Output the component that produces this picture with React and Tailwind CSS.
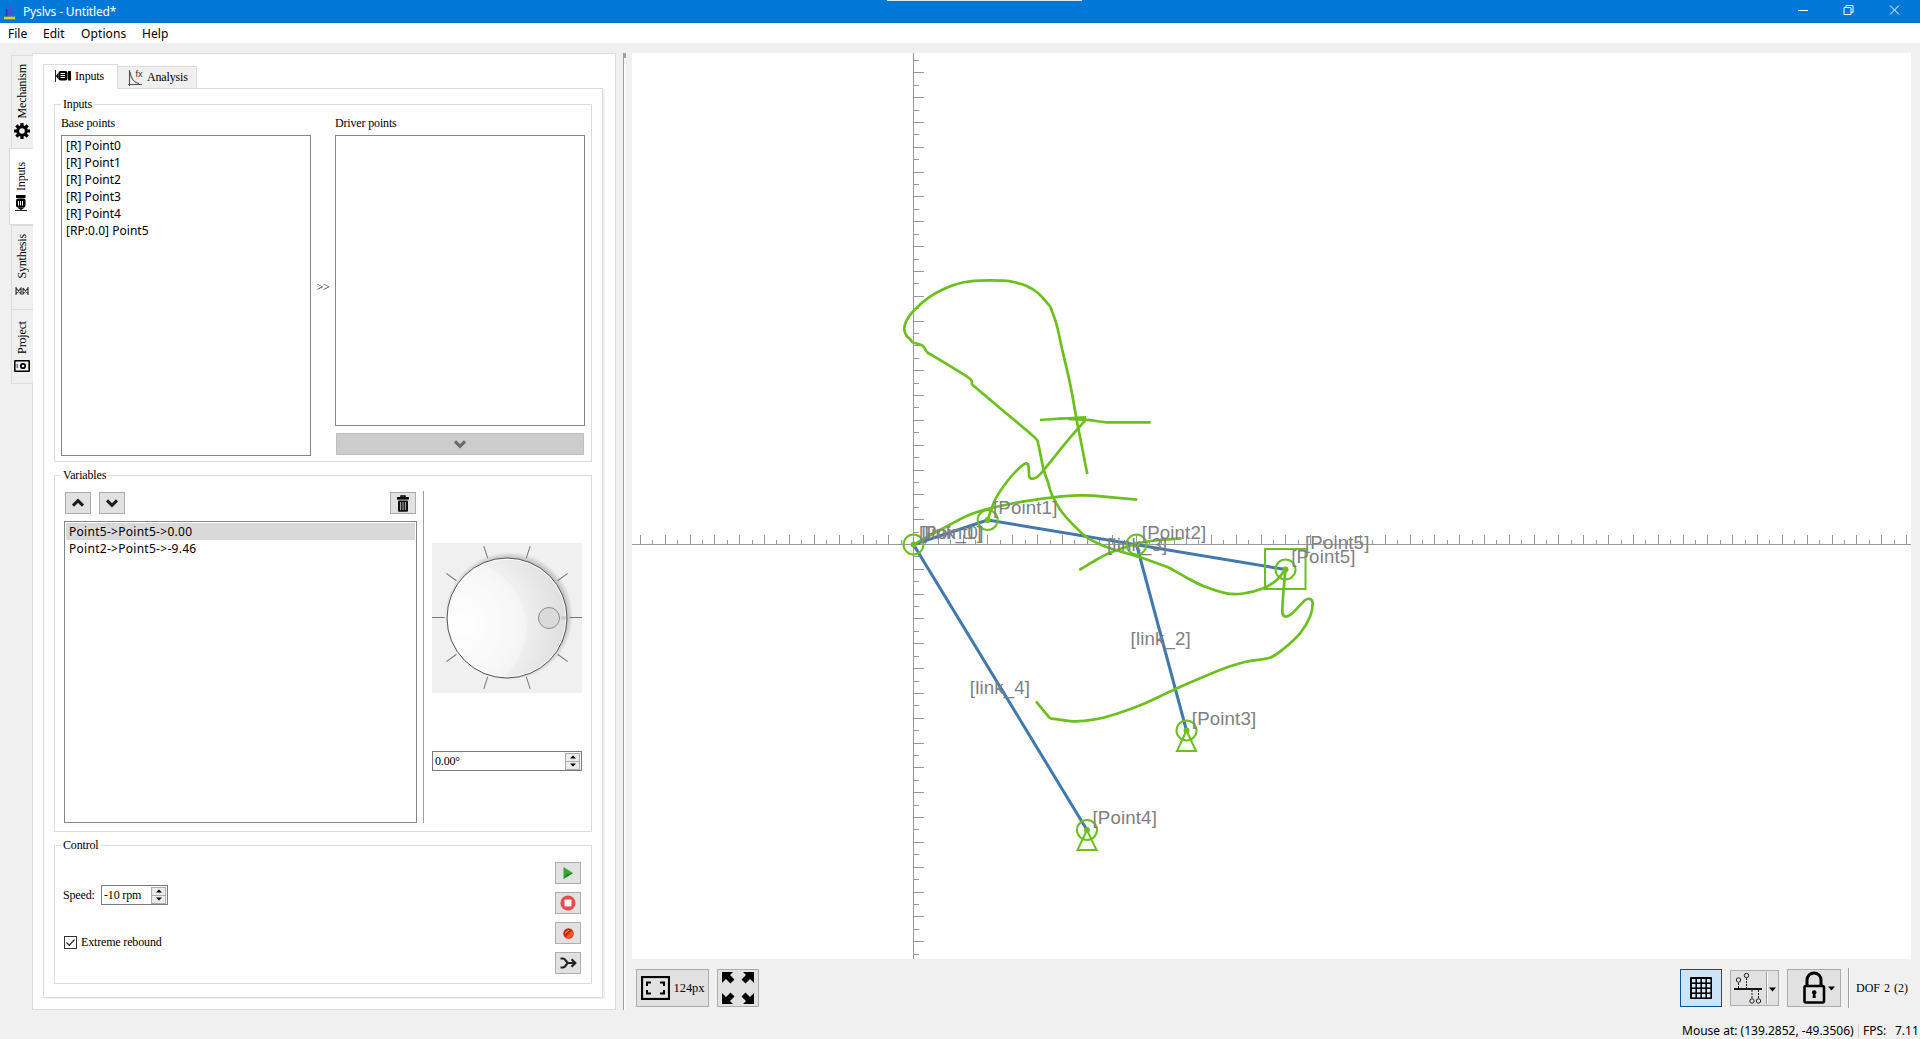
import React from "react";

const GREEN = "#6cc01d";
const BLUE = "#4178ae";

/* ---------- small icons ---------- */
const Motor = ({ className = "" }) => (
  <svg width="16" height="14" viewBox="0 0 16 14" className={className}>
    <path d="M0.5 1v12M0.5 7H3" stroke="#222" strokeWidth="1" />
    <path d="M1.5 6l2-2.500v7l-2-2.500z" fill="#000" />
    <rect x="3.500" y="2" width="9" height="9.500" rx="2" fill="#000" />
    <path d="M5.500 4.500h4.500M5.500 6.500h4.500M5.500 8.500h4.500" stroke="#fff" strokeWidth="1" />
    <rect x="13" y="2" width="3" height="9.500" rx="0.500" fill="#000" />
  </svg>
);

const Gear = () => (
  <svg width="16" height="16" viewBox="0 0 16 16">
    <circle cx="8" cy="8" r="4.3" fill="none" stroke="#000" strokeWidth="3" />
    <path d="M8 0v3.500M8 12.500V16M0 8h3.500M12.500 8H16M2.340 2.340l2.500 2.500M11.200 11.200l2.460 2.460M13.660 2.340l-2.500 2.500M4.840 11.200l-2.500 2.460" stroke="#000" strokeWidth="3.200" />
  </svg>
);

const SynthesisIcon = () => (
  <svg width="14" height="8" viewBox="0 0 14 8">
    <path d="M1 0v8M13 0v8M1 1l5 6V1L1 7M8 1v6l5-6M8 1l5 6" fill="none" stroke="#333" strokeWidth="1.1" />
  </svg>
);

const ProjectIcon = () => (
  <svg width="16" height="12" viewBox="0 0 16 12">
    <rect x="0.8" y="0.8" width="14.4" height="10.4" rx="0.5" fill="#f0f0f0" stroke="#000" strokeWidth="1.6" />
    <circle cx="9" cy="6" r="2.2" fill="none" stroke="#000" strokeWidth="1.8" />
    <path d="M3.3 4v4" stroke="#777" strokeWidth="1.5" />
  </svg>
);

const ChevronGlyph = ({ up, color = "#1c1c1c" }) => (
  <svg width="14" height="10" viewBox="0 0 14 10" className={up ? "rotate-180" : ""}>
    <path d="M2 2.4l5 5 5-5" fill="none" stroke={color} strokeWidth="3" />
  </svg>
);

const Trash = () => (
  <svg width="12" height="17" viewBox="0 0 12 17">
    <path d="M4 2V1h4v1" fill="none" stroke="#000" strokeWidth="1.4" />
    <rect x="0" y="2" width="12" height="2.6" fill="#000" />
    <rect x="1" y="5.4" width="10" height="11.4" rx="1" fill="#111" />
    <path d="M3.6 7v8M6 7v8M8.4 7v8" stroke="#b0b0b0" strokeWidth="1" />
  </svg>
);

const Button = ({ children, className = "" }) => (
  <div className={"flex items-center justify-center border border-[#adadad] bg-[#e1e1e1] " + className}>{children}</div>
);

const Spin = ({ value, className = "" }) => (
  <div className={"flex h-[20px] items-center justify-between border border-[#7a7a7a] bg-white pl-[2px] pr-px " + className}>
    <span>{value}</span>
    <div className="flex h-[17px] w-[15px] flex-col border border-[#adadad] bg-[#ececec]">
      <div className="flex flex-1 items-center justify-center border-b border-[#adadad]">
        <svg width="6" height="4" viewBox="0 0 6 4"><path d="M0 3.5L3 0.5l3 3z" fill="#000" /></svg>
      </div>
      <div className="flex flex-1 items-center justify-center">
        <svg width="6" height="4" viewBox="0 0 6 4"><path d="M0 0.5L3 3.5l3-3z" fill="#000" /></svg>
      </div>
    </div>
  </div>
);

const Group = ({ title, className = "", children }) => (
  <div className={"ml-[10px] w-[538px] border border-[#dcdcdc] " + className}>
    <div className="-mt-[8px] ml-[6px] h-[15px] w-fit bg-white px-[2px] leading-[15px]">{title}</div>
    {children}
  </div>
);

const SideTab = ({ label, icon, className = "" }) => (
  <div className={"flex flex-col items-center border border-r-0 border-[#dcdcdc] " + className}>
    <span className="rotate-180 text-[12px] leading-[16px] [writing-mode:vertical-rl]">{label}</span>
    {icon}
  </div>
);

/* ---------- dial ---------- */
const Dial = () => (
  <svg width="150" height="150" viewBox="0 0 150 150" className="bg-[#f0f0f0]">
    <defs>
      <radialGradient id="face" cx="0.1" cy="0.55" r="0.95">
        <stop offset="0" stopColor="#ffffff" />
        <stop offset="0.5" stopColor="#f3f3f3" />
        <stop offset="1" stopColor="#dcdcdc" />
      </radialGradient>
      <radialGradient id="shade" cx="0.5" cy="0.5" r="0.5">
        <stop offset="0.9" stopColor="#bdbdbd" />
        <stop offset="1" stopColor="#f0f0f0" />
      </radialGradient>
      <clipPath id="dialClip"><circle cx="75" cy="75" r="60" /></clipPath>
    </defs>
    <circle cx="77" cy="73" r="64" fill="url(#shade)" />
    <circle cx="75" cy="75" r="60" fill="url(#face)" />
    <circle cx="28" cy="84" r="66" fill="#fff" opacity="0.35" clipPath="url(#dialClip)" />
    <circle cx="75" cy="75" r="59" fill="none" stroke="#fff" strokeWidth="1" />
    <circle cx="75" cy="75" r="60" fill="none" stroke="#555" strokeWidth="1" />
    {[0, 36, 72, 108, 144, 180, 216, 252, 288, 324].map((a) => (
      <path key={a} d="M137.5 74.500H150" stroke="#777" strokeWidth="1" transform={`rotate(${a} 75 74.500)`} />
    ))}
    <path d="M129 75h5" stroke="#c8c8c8" strokeWidth="3" />
    <circle cx="117" cy="75" r="10.5" fill="#dadada" stroke="#8c8c8c" />
  </svg>
);

/* ---------- drawing canvas (view box uses window coordinates) ---------- */
const OX = 913.5;
const OY = 544.5;
const STEP = 12.413;

function ticks() {
  let d = "";
  for (let i = -22; i <= 80; i++) {
    const x = Math.round(OX + i * STEP - 0.5) + 0.5;
    d += `M${x} ${OY}v${i % 2 ? -5 : -10}`;
  }
  for (let i = -39; i <= 33; i++) {
    const y = Math.round(OY + i * STEP - 0.5) + 0.5;
    d += `M${OX} ${y}h${i % 2 ? 5 : 10}`;
  }
  return d;
}

function smooth(p) {
  let d = `M${p[0][0]} ${p[0][1]}`;
  for (let i = 0; i < p.length - 1; i++) {
    const a = p[i - 1] || p[i];
    const b = p[i];
    const c = p[i + 1];
    const e = p[i + 2] || c;
    d += `C${b[0] + (c[0] - a[0]) / 7} ${b[1] + (c[1] - a[1]) / 7} ${c[0] - (e[0] - b[0]) / 7} ${c[1] - (e[1] - b[1]) / 7} ${c[0]} ${c[1]}`;
  }
  return d;
}

const TRACES = [
  [[1087.3, 474], [1080, 436.7], [1076.7, 420], [1070, 383.3], [1062.3, 350], [1056.7, 325], [1050.3, 306.5]],
  [[1050.3, 306.5], [1038.3, 293.3], [1026.7, 286], [1015, 282.3], [1003.3, 280.6], [980, 280.6], [961.7, 282.7], [946.7, 287.7], [930, 296.7], [913.3, 311], [906, 321.7], [904.3, 330], [906.7, 336], [910, 339], [912.5, 342.5]],
  [[912.5, 342.5], [922.5, 345.7], [926.7, 352]],
  [[926.7, 352], [968.3, 377.5], [971.7, 384.3]],
  [[971.7, 384.3], [998.3, 406.7], [1034, 436.7], [1038.3, 444.3], [1043.3, 468.3], [1048.3, 483.3], [1052, 495], [1061.7, 511.7], [1076.7, 528.3], [1088.3, 538.3], [1110, 548.3], [1138.3, 556.7], [1160, 564.3], [1170, 568.3], [1186.7, 577.7], [1203.3, 586], [1226.7, 593.3], [1243.3, 593.5], [1263.3, 588.3], [1276.7, 580], [1285.5, 569.5]],
  [[1285.5, 569.5], [1283.3, 593.3], [1282.5, 613.3], [1286.7, 616.5], [1293.3, 612.3], [1305, 600.3], [1310, 599], [1312.7, 603.3], [1310, 616.7], [1300, 633.3], [1283.3, 649], [1270, 657.7], [1245, 662], [1223.3, 668.7], [1200, 678.3], [1173.3, 690], [1143.3, 704], [1116.7, 713.7], [1093.3, 719.7], [1073.3, 721.3], [1050, 718.3]],
  [[1050, 718.3], [1036, 701.3]],
  [[913.5, 544.5], [943.3, 528.3], [973.3, 513.3], [1013.3, 503.3], [1053.3, 497.3], [1080, 495.4], [1093.3, 495.7], [1137.3, 499.7]],
  [[987.7, 520], [995, 500], [1008.3, 480], [1022.5, 465.3], [1028, 464.3], [1029.3, 476.5], [1032, 478.6], [1040, 474.3], [1066.7, 441.7], [1086, 419.5]],
  [[1040, 420], [1060, 418.7], [1080, 417.7], [1086, 417.3]],
  [[1068, 419], [1090, 420.2], [1106.7, 422.3], [1150.7, 422.4]],
  [[1079.3, 570], [1106.7, 554.3], [1136.7, 543.7], [1160, 540], [1181.7, 538.4]],
];

const POINTS = [[913.5, 544.5], [987.7, 520], [1136.5, 544.5], [1285.5, 569.5], [1186.5, 730.5], [1087, 830]];

const LABELS = [
  ["[link_1]", 921.5, 539], ["[Point0]", 919, 539], ["[Point1]", 993, 514], ["[Point2]", 1141.8, 539],
  ["[link_3]", 1107, 551], ["[Point5]", 1305, 549], ["[Point5]", 1291.2, 563], ["[link_2]", 1130.6, 645],
  ["[link_4]", 969.8, 694], ["[Point3]", 1191.8, 725], ["[Point4]", 1092.5, 824],
];

const Canvas = () => (
  <svg width="1279" height="906" viewBox="632 53 1279 906" className="block bg-white">
    <g stroke="#98989c" strokeWidth="1" fill="none" shapeRendering="crispEdges">
      <path d={`M632 ${OY}H1911M${OX} 53V959`} />
      <path d={ticks()} />
    </g>
    <path d="M987.7 520L913.5 544.5L1087 830M987.7 520L1285.5 569.5M1136.5 544.5L1186.5 730.5" fill="none" stroke={BLUE} strokeWidth="3" />
    <g fill="none" stroke={GREEN} strokeWidth="2">
      {POINTS.map(([x, y], i) => (
        <g key={i}>
          <circle cx={x} cy={y} r="10" />
          <circle cx={x} cy={y} r="3" fill={GREEN} stroke="none" />
        </g>
      ))}
      <path d="M1186.5 730.5l-9.5 20.5h19zM1087 830l-9.500 20h19z" />
      <rect x="1265" y="549" width="40.500" height="40" />
    </g>
    <g fill="none" stroke={GREEN} strokeWidth="2.7">
      {TRACES.map((t, i) => <path key={i} d={smooth(t)} />)}
    </g>
    <g fill="#808080" fontFamily='"Liberation Sans", Arial, sans-serif' fontSize="18.67" letterSpacing="0.15">
      {LABELS.map(([t, x, y], i) => <text key={i} x={x} y={y}>{t}</text>)}
    </g>
  </svg>
);

/* ---------- left panel ---------- */
const UI_SANS = "font-['Noto_Sans','Open_Sans',sans-serif]";

const InputsGroup = () => (
  <Group title="Inputs" className="mt-[15px] h-[358px]">
    <div className="ml-[6px] mt-[4px] flex">
      <div className="w-[250px]">
        <div className="h-[19px] leading-[15px]">Base points</div>
        <div className={"h-[321px] border border-[#828790] pl-[4px] pt-px text-[12px] tracking-[0.03px] " + UI_SANS}>
          {["[R] Point0", "[R] Point1", "[R] Point2", "[R] Point3", "[R] Point4", "[RP:0.0] Point5"].map((t) => (
            <div key={t} className="h-[17px] leading-[17px]">{t}</div>
          ))}
        </div>
      </div>
      <div className="flex w-[24px] items-center justify-center pt-[2px] text-[12px]">&gt;&gt;</div>
      <div className="w-[250px]">
        <div className="h-[19px] leading-[15px]">Driver points</div>
        <div className="h-[291px] border border-[#828790]" />
        <div className="mx-px mt-[7px] flex h-[22px] items-center justify-center border border-[#bfbfbf] bg-[#cccccc]">
          <ChevronGlyph color="#6a6a6a" />
        </div>
      </div>
    </div>
  </Group>
);

const VariablesGroup = () => (
  <Group title="Variables" className="mt-[13px] h-[357px]">
    <div className="ml-[9px] mt-[8px] flex">
      <div className="w-[353px]">
        <div className="flex h-[30px] gap-[8px] pl-px pr-px pt-px">
          <Button className="h-[22px] w-[26px]"><ChevronGlyph up /></Button>
          <Button className="h-[22px] w-[26px]"><ChevronGlyph /></Button>
          <Button className="ml-auto h-[22px] w-[26px]"><Trash /></Button>
        </div>
        <div className={"h-[302px] border border-[#828790] p-px text-[12px] tracking-[0.28px] " + UI_SANS}>
          <div className="h-[17px] bg-[#d9d9d9] pl-[3px] leading-[17px]">Point5-&gt;Point5-&gt;0.00</div>
          <div className="h-[17px] pl-[3px] leading-[17px]">Point2-&gt;Point5-&gt;-9.46</div>
        </div>
      </div>
      <div className="ml-[6px] h-[332px] w-px bg-[#a0a0a0]" />
      <div className="ml-[8px] w-[150px] pt-[52px]">
        <Dial />
        <Spin value={"0.00°"} className="mt-[58px] w-[150px]" />
      </div>
    </div>
  </Group>
);

const ControlGroup = () => (
  <Group title="Control" className="mt-[13px] h-[139px]">
    <div className="ml-[9px] mr-[10px] mt-[9px] flex justify-between">
      <div className="pt-[23px]">
        <div className="flex items-center">
          <span className="-ml-px w-[38px]">Speed:</span>
          <Spin value="-10 rpm" className="w-[67px]" />
        </div>
        <div className="mt-[31px] flex h-[13px] items-center gap-[4px]">
          <svg width="13" height="13" viewBox="0 0 13 13">
            <rect x="0.5" y="0.5" width="12" height="12" fill="#fff" stroke="#333" />
            <path d="M2.500 6.500l2.800 2.800L10.500 3.500" fill="none" stroke="#333" strokeWidth="1.3" />
          </svg>
          <span>Extreme rebound</span>
        </div>
      </div>
      <div className="flex flex-col gap-[8px]">
        <Button className="h-[22px] w-[26px]">
          <svg width="10" height="12" viewBox="0 0 10 12"><path d="M0.500 0L10 6L0.500 12z" fill="#3aa63a" /><path d="M0.500 12L10 6L4 7z" fill="#178a17" /></svg>
        </Button>
        <Button className="h-[22px] w-[26px]">
          <svg width="16" height="16" viewBox="0 0 16 16"><circle cx="8" cy="8" r="7.600" fill="#e84c4c" /><rect x="4.500" y="4.500" width="7" height="7" rx="1" fill="#fff" /></svg>
        </Button>
        <Button className="h-[22px] w-[26px]">
          <svg width="11" height="11" viewBox="0 0 11 11"><circle cx="5.500" cy="5.500" r="5.200" fill="#cf2208" /><path d="M2 9.500L9 2.500A5 5 0 0 1 2 9.500z" fill="#ee5a20" /><path d="M2 5.500L6 2" stroke="#f4b0a0" strokeWidth="1" /></svg>
        </Button>
        <Button className="h-[22px] w-[26px]">
          <svg width="17" height="12" viewBox="0 0 17 12"><path d="M0.500 1.500H3C6 1.500 6 6 8.500 6H15M0.500 10.500H3C6 10.500 6 6 8.500 6M11.500 2.200L15.300 6l-3.800 3.800" fill="none" stroke="#222" strokeWidth="2.200" /></svg>
        </Button>
      </div>
    </div>
  </Group>
);

const LeftPanel = () => (
  <div className="flex h-[957px] font-['Liberation_Serif',serif] text-[12px] leading-[15px] tracking-[-0.16px]">
    <div className="z-10 -mr-px mt-[2px] flex w-[24px] flex-col items-end">
      <SideTab label="Mechanism" className="h-[94px] w-[22px] gap-[4px] bg-[#f0f0f0] pr-[2px] pt-[8px]" icon={<Gear />} />
      <SideTab label="Inputs" className="-mt-px h-[77px] w-[24px] gap-[5px] bg-white pr-[2px] pt-[13px]" icon={<Motor className="-rotate-90" />} />
      <SideTab label="Synthesis" className="h-[85px] w-[22px] gap-[8px] bg-[#f0f0f0] pr-[2px] pt-[8px]" icon={<SynthesisIcon />} />
      <SideTab label="Project" className="-mt-px h-[75px] w-[22px] gap-[6px] bg-[#f0f0f0] pr-[2px] pt-[11px]" icon={<ProjectIcon />} />
    </div>
    <div className="h-[957px] w-[584px] border border-[#dcdcdc] bg-white pl-[10px] pt-[10px]">
      <div className="flex h-[24px] items-end">
        <div className="z-10 -mb-px flex h-[25px] w-[75px] items-center gap-[4px] border border-b-0 border-[#dcdcdc] bg-white pl-[11px] pb-[2px]">
          <Motor />
          <span>Inputs</span>
        </div>
        <div className="flex h-[22px] w-[79px] items-center gap-[4px] border border-b-0 border-l-0 border-[#dcdcdc] bg-[#f0f0f0] pl-[10px]">
          <svg width="15" height="16" viewBox="0 0 15 16">
            <path d="M1.500 0v16M0 14.500h14M2 2c1 7 4 10.500 9 11.500" fill="none" stroke="#555" strokeWidth="1.100" />
            <text x="7.500" y="6.500" fontSize="9" letterSpacing="0" fontFamily="Liberation Sans, sans-serif" fill="#333">fx</text>
          </svg>
          <span>Analysis</span>
        </div>
      </div>
      <div className="h-[910px] w-[560px] border border-[#dcdcdc] shadow-[2px_1px_0_0_#f0f0f0]">
        <InputsGroup />
        <VariablesGroup />
        <ControlGroup />
      </div>
    </div>
  </div>
);

/* ---------- bottom toolbar ---------- */
const Arrow = () => <path d="M0 0h11L8 3l4.500 4.500-4 4L4 7l-4 4z" />;

const Toolbar = () => (
  <div className="ml-[4px] mt-[9px] flex h-[40px] w-[1275px] items-center font-['Liberation_Serif',serif] text-[12px]">
    <Button className="h-[38px] w-[73px] gap-[4px]">
      <svg width="29" height="24" viewBox="0 0 29 24">
        <rect x="1" y="1" width="27" height="22" fill="none" stroke="#000" strokeWidth="2.200" />
        <path d="M6 10V6.500h4M19 6.500h4V10M23 14v3.500h-4M10 17.500H6V14" fill="none" stroke="#000" strokeWidth="2" />
      </svg>
      <span className="text-[12.500px] tracking-[-0.1px]">124px</span>
    </Button>
    <Button className="ml-[8px] h-[38px] w-[42px]">
      <svg width="32" height="32" viewBox="0 0 32 32">
        <g><Arrow /></g>
        <g transform="translate(32 0) scale(-1 1)"><Arrow /></g>
        <g transform="translate(0 32) scale(1 -1)"><Arrow /></g>
        <g transform="translate(32 32) scale(-1 -1)"><Arrow /></g>
      </svg>
    </Button>
    <div className="ml-auto flex h-[38px] w-[42px] items-center justify-center border border-[#005499] bg-[#cce4f7]">
      <svg width="22" height="22" viewBox="0 0 22 22">
        <rect width="22" height="22" rx="1" fill="#000" />
        {[2, 7, 12, 17].map((y) => [2, 7, 12, 17].map((x) => <rect key={`${x}-${y}`} x={x} y={y} width="3.400" height="3.400" fill="#d6eaf9" />))}
      </svg>
    </div>
    <Button className="ml-[8px] h-[36px] w-[49px]">
      <svg width="47" height="34" viewBox="0 0 47 34">
        <path d="M3 18h28" stroke="#000" strokeWidth="1.800" />
        <g fill="none" stroke="#222" strokeWidth="1">
          <circle cx="7.500" cy="9" r="2.200" /><circle cx="15.500" cy="4.500" r="2.200" />
          <circle cx="21" cy="30" r="2.200" /><circle cx="27.500" cy="30" r="2.200" />
          <path d="M7.500 12v6M15.500 7v11M21 19v9M27.500 19v9" strokeDasharray="2 1" />
        </g>
        <path d="M35.500 1v32" stroke="#a0a0a0" /><path d="M36.500 1v32" stroke="#fff" />
        <path d="M38 16.500h7l-3.500 4z" fill="#000" />
      </svg>
    </Button>
    <Button className="ml-[8px] h-[38px] w-[54px]">
      <svg width="52" height="36" viewBox="0 0 52 36">
        <path d="M19 16v-6a7 7 0 0 1 14 0v6" fill="none" stroke="#000" strokeWidth="3" />
        <rect x="16.500" y="16" width="19.500" height="16.500" rx="1.500" fill="#e1e1e1" stroke="#000" strokeWidth="2.600" />
        <circle cx="26.200" cy="22.500" r="2.300" /><path d="M25.200 23h2l.6 5h-3.200z" />
        <path d="M40 16.500h7l-3.500 4z" fill="#000" />
      </svg>
    </Button>
    <div className="ml-[7px] h-[40px] w-[2px] border-l border-[#a0a0a0] bg-white" />
    <span className="ml-[6px] w-[55px] whitespace-nowrap text-[12px] [word-spacing:1px]">DOF 2 (2)</span>
  </div>
);

export default function App() {
  return (
    <div className="flex h-[1039px] w-[1920px] flex-col overflow-hidden bg-[#f0f0f0] text-black">
      <div className={"flex h-[23px] shrink-0 items-center bg-[#0078d7] pl-[4px] text-[12px] text-white " + UI_SANS}>
        <svg width="12" height="14" viewBox="0 0 12 14" className="mt-[3px]">
          <path d="M7 0v8M4 7.500h6" stroke="#8a2be2" strokeWidth="1.600" />
          <path d="M2.500 3v8" stroke="#1d3f9c" strokeWidth="1.600" />
          <path d="M0 12h11" stroke="#e8d01c" strokeWidth="2.600" />
        </svg>
        <span className="ml-[7px] w-[780px] pt-px tracking-[-0.15px]">Pyslvs - Untitled*</span>
        <div className="ml-[84px] h-px w-[195px] self-start bg-[#e8e8e8]" />
        <svg width="104" height="12" viewBox="0 0 104 12" className="ml-auto mr-[19px] -mt-[3px]" fill="none" stroke="#fff">
          <path d="M1 6.500h10" />
          <path d="M47 3.500h7v7h-7zM49 3.500v-2h7v7h-2" />
          <path d="M93 1.500l9 9M102 1.500l-9 9" />
        </svg>
      </div>
      <div className={"flex h-[20px] shrink-0 items-center bg-white pl-[8px] pt-[2px] text-[12px] " + UI_SANS}>
        <span className="w-[35px]">File</span>
        <span className="w-[38px]">Edit</span>
        <span className="w-[61px] tracking-[0.1px]">Options</span>
        <span className="tracking-[0.1px]">Help</span>
      </div>
      <div className="flex flex-1 pt-[10px]">
        <div className="pl-[9px]"><LeftPanel /></div>
        <div className="ml-[7px] h-[957px] w-[3px] border-l border-[#a0a0a0] bg-[#fafafa]">
          <div className="h-[5px] bg-[#a0a0a0]" />
        </div>
        <div className="ml-[6px] flex flex-col">
          <Canvas />
          <Toolbar />
          <div className={"mt-[13px] flex h-[18px] w-[1288px] items-center whitespace-nowrap pt-[2px] text-[12px] leading-[18px] " + UI_SANS}>
            <span className="ml-auto w-[176px]">Mouse at: (139.2852, -49.3506)</span>
            <div className="h-[14px] w-px bg-[#d4d4d4]" />
            <span className="ml-[4px] w-[32px]">FPS:</span>
            <span className="w-[25px]">7.11</span>
          </div>
        </div>
      </div>
    </div>
  );
}
